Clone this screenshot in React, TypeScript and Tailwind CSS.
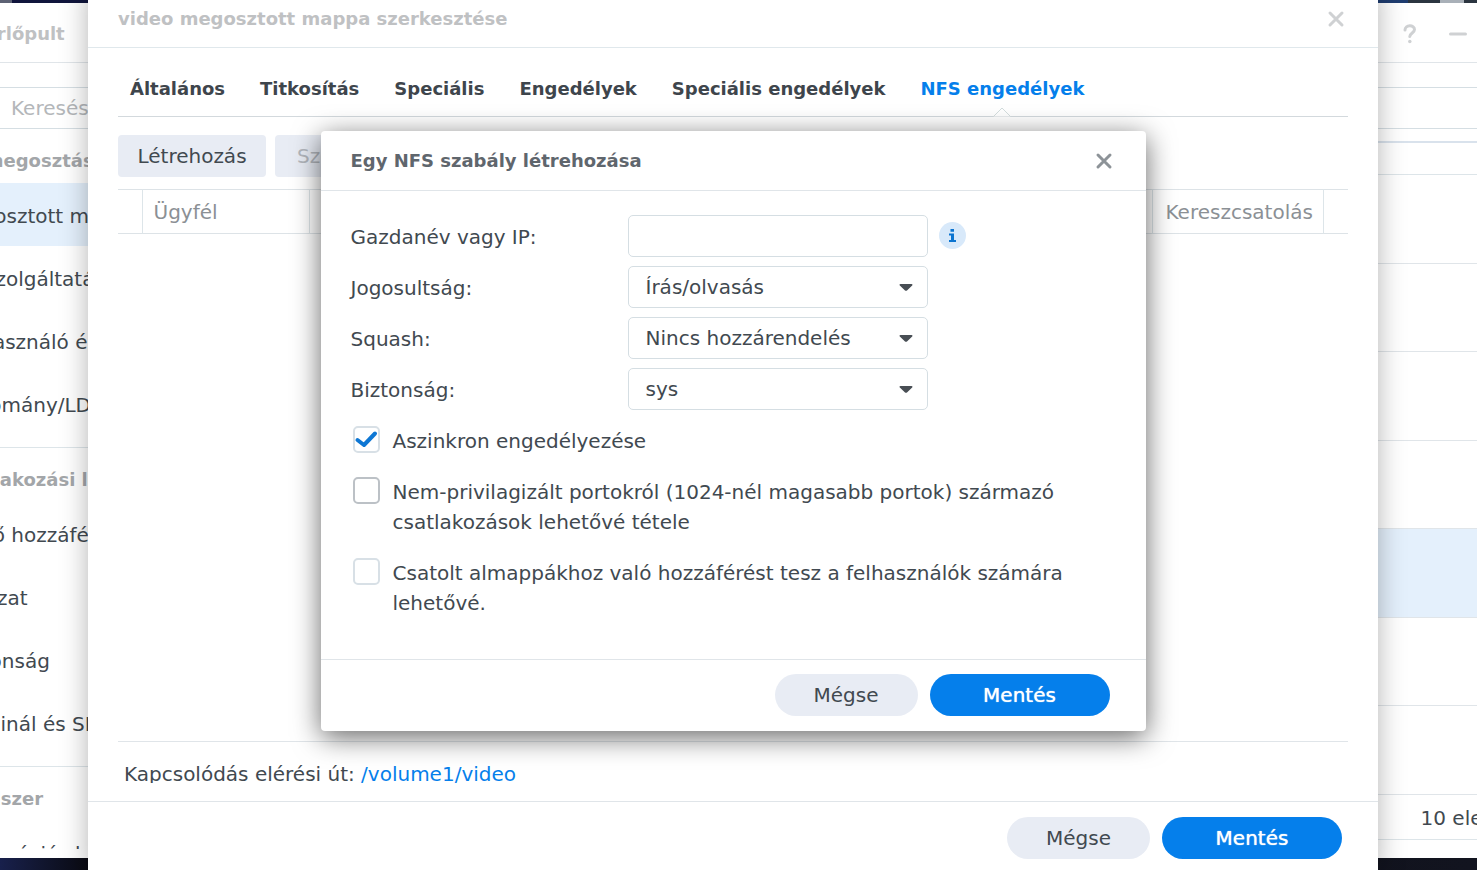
import type { ReactNode } from "react";
import { clsx } from "clsx";

const NAV_GROUPS = [
  {
    title: "Fájlmegosztás",
    items: ["Megosztott mappa", "Fájlszolgáltatások", "Felhasználó és csoport", "Tartomány/LDAP"],
  },
  {
    title: "Csatlakozási lehetőség",
    items: ["Külső hozzáférés", "Hálózat", "Biztonság", "Terminál és SNMP"],
  },
  { title: "Rendszer", items: ["Információs központ"] },
];

const TABS = ["Általános", "Titkosítás", "Speciális", "Engedélyek", "Speciális engedélyek", "NFS engedélyek"];
const ACTIVE_TAB = "NFS engedélyek";

const SELECTS = [
  { id: "privilege", label: "Jogosultság:", value: "Írás/olvasás" },
  { id: "squash", label: "Squash:", value: "Nincs hozzárendelés" },
  { id: "security", label: "Biztonság:", value: "sys" },
];

const OPTIONS = [
  { id: "async", label: "Aszinkron engedélyezése", checked: true, border: "border-[#d8e0e6]" },
  {
    id: "ports",
    label: "Nem-privilagizált portokról (1024-nél magasabb portok) származó csatlakozások lehetővé tétele",
    checked: false,
    border: "border-[#bcc1c6]",
  },
  {
    id: "subfolders",
    label: "Csatolt almappákhoz való hozzáférést tesz a felhasználók számára lehetővé.",
    checked: false,
    border: "border-[#d8e0e6]",
  },
];

function CloseButton({ className }: { className: string }) {
  return (
    <button type="button" aria-label="Bezárás" className={className}>
      <svg width="18" height="18" viewBox="0 0 18 18" fill="none" stroke="currentColor" strokeWidth="3" strokeLinecap="round">
        <path d="M3 3l12 12M15 3L3 15" />
      </svg>
    </button>
  );
}

function DialogFooter() {
  return (
    <footer className="flex h-[72px] shrink-0 items-center justify-end gap-3 border-t border-[#e0e5e9] px-9">
      <button type="button" className="h-[42px] w-[143px] rounded-full bg-[#e8ecf4]">
        Mégse
      </button>
      <button type="button" className="h-[42px] w-[180px] rounded-full bg-[#057feb] text-white [text-shadow:0_0_1px_white]">
        Mentés
      </button>
    </footer>
  );
}

function FormRow({ id, label, children }: { id: string; label: string; children: ReactNode }) {
  return (
    <div className="flex items-center">
      <label htmlFor={id} className="w-[277px] pt-0.5">
        {label}
      </label>
      {children}
    </div>
  );
}

function RuleDialog() {
  return (
    <section
      role="dialog"
      aria-label="Egy NFS szabály létrehozása"
      className="flex w-[825px] flex-col rounded bg-white shadow-[0_6px_28px_rgba(0,0,0,0.6)]"
    >
      <header className="flex h-[60px] items-center justify-between border-b border-[#e0e5e9] pt-0.5 pr-[33px] pl-[30px]">
        <h2 className="text-lg font-bold text-[#5f666d]">Egy NFS szabály létrehozása</h2>
        <CloseButton className="text-[#8d9398]" />
      </header>

      <form className="px-[30px] pt-6 pb-[41px]">
        <div className="flex flex-col gap-[9px]">
          <FormRow id="host" label="Gazdanév vagy IP:">
            <input id="host" type="text" className="h-[42px] w-[300px] rounded-[5px] border border-[#d5dee3] px-4 outline-none" />
            <button
              type="button"
              aria-label="Információ"
              className="ml-[11px] flex size-[27px] items-center justify-center rounded-full bg-[#d8e9fa] text-[#0b74d0]"
            >
              <svg width="9" height="13" viewBox="0 0 9 13" fill="currentColor">
                <path d="M2.500 0h3.500v2.800H2.500zM1 4.500h5V11h2v2H1v-2h2V6.500H1z" />
              </svg>
            </button>
          </FormRow>

          {SELECTS.map((field) => (
            <FormRow key={field.id} id={field.id} label={field.label}>
              <div className="relative">
                <select
                  id={field.id}
                  className="h-[42px] w-[300px] appearance-none rounded-[5px] border border-[#d5dee3] bg-white px-[17px] outline-none"
                >
                  <option>{field.value}</option>
                </select>
                <svg
                  className="pointer-events-none absolute top-[18px] right-[15px]"
                  width="14"
                  height="7"
                  viewBox="0 0 14 7"
                  fill="#484e54"
                >
                  <path d="M1.500 0h11c1 0 1.300.900.700 1.500L8 6.400c-.600.600-1.400.600-2 0L.800 1.500C.200.900.500 0 1.500 0z" />
                </svg>
              </div>
            </FormRow>
          ))}
        </div>

        <div className="mt-4 flex flex-col gap-[21px]">
          {OPTIONS.map((option) => (
            <div key={option.id} className="flex items-start pl-[2px]">
              <div className="relative size-[27px] shrink-0">
                <input
                  id={option.id}
                  type="checkbox"
                  defaultChecked={option.checked}
                  className={clsx("peer block size-[27px] appearance-none rounded-[5px] border-2", option.border)}
                />
                <svg
                  className="pointer-events-none absolute inset-0 hidden peer-checked:block"
                  width="27"
                  height="27"
                  viewBox="0 0 27 27"
                  fill="none"
                  stroke="#0e77d4"
                  strokeWidth="4"
                  strokeLinecap="round"
                  strokeLinejoin="round"
                >
                  <path d="M4.500 14l6.500 5L22 7.500" />
                </svg>
              </div>
              <label htmlFor={option.id} className="ml-[13px] leading-[30px]">
                {option.label}
              </label>
            </div>
          ))}
        </div>
      </form>

      <DialogFooter />
    </section>
  );
}

function FolderDialog() {
  return (
    <section
      role="dialog"
      aria-label="video megosztott mappa szerkesztése"
      className="absolute -top-3 right-[99px] -bottom-[3px] left-[88px] flex flex-col bg-white shadow-[0_0_26px_rgba(0,0,0,0.3)]"
    >
      <header className="flex h-[60px] shrink-0 items-center justify-between border-b border-[#e0e8ec] pt-0.5 pr-[33px] pl-[30px]">
        <h1 className="text-lg font-bold text-[#bfc1c3]">video megosztott mappa szerkesztése</h1>
        <CloseButton className="text-[#cfd1d3]" />
      </header>

      <div className="flex min-h-0 flex-1 flex-col px-[30px]">
        <nav role="tablist" className="flex h-[69px] shrink-0 gap-[35px] border-b border-[#d3d9dd] px-3">
          {TABS.map((tab) => (
            <button
              key={tab}
              type="button"
              role="tab"
              aria-selected={tab === ACTIVE_TAB}
              className={clsx(
                "relative pt-[14px] text-lg font-bold whitespace-nowrap",
                tab === ACTIVE_TAB ? "text-[#057feb]" : "text-[#3e454c]"
              )}
            >
              {tab}
              {tab === ACTIVE_TAB && (
                <svg
                  className="absolute -bottom-px left-1/2 -translate-x-1/2"
                  width="18"
                  height="10"
                  viewBox="0 0 18 10"
                  fill="white"
                  stroke="#d3dddd"
                >
                  <path d="M.5 9.500L9 1l8.500 8.500" />
                </svg>
              )}
            </button>
          ))}
        </nav>

        <div className="mt-[18px] flex h-[42px] shrink-0 gap-[9px]">
          <button type="button" className="w-[148px] rounded bg-[#e8ecf4] whitespace-nowrap">
            Létrehozás
          </button>
          <button type="button" disabled className="rounded bg-[#e8ecf4] px-[22px] text-[#b2b6bc]">
            Szerkesztés
          </button>
        </div>

        <table className="mt-3 w-full table-fixed border-y border-[#dde3e7]">
          <thead>
            <tr className="h-11 text-left text-[#8b9095]">
              <td className="w-6 border-r border-[#dde5e9]" />
              <th className="w-[167px] border-r border-[#dde5e9] px-[11px] font-normal">Ügyfél</th>
              <td />
              <th className="w-[171px] border-x border-[#dde5e9] pl-[13px] font-normal whitespace-nowrap">Kereszcsatolás</th>
              <td className="w-[25px]" />
            </tr>
          </thead>
        </table>

        <div className="mt-auto h-[60px] shrink-0 border-t border-[#e0e5e9] pt-[17px]">
          <p className="h-6 overflow-hidden px-[6px] leading-[30px]">
            Kapcsolódás elérési út:{" "}
            <a href="#video" className="text-[#057feb]">
              /volume1/video
            </a>
          </p>
        </div>
      </div>

      <DialogFooter />

      <div className="absolute inset-0 flex items-center justify-center">
        <RuleDialog />
      </div>
    </section>
  );
}

function Sidebar() {
  return (
    <aside className="flex w-[320px] flex-col overflow-hidden">
      {NAV_GROUPS.map((group) => (
        <div key={group.title} className="border-b border-[#dde5e9] pb-3">
          <h3 className="flex h-[54px] items-end pb-2 pl-5 text-lg font-bold text-[#a3a6a9]">{group.title}</h3>
          {group.items.map((item) => (
            <a
              key={item}
              href="#nav"
              className={clsx(
                "flex h-[63px] items-center pt-0.5 pl-[23px] whitespace-nowrap",
                item === "Megosztott mappa" && "bg-[#e4f0fc]"
              )}
            >
              {item}
            </a>
          ))}
        </div>
      ))}
    </aside>
  );
}

function ControlPanel() {
  return (
    <main className="absolute top-[3px] -right-[109px] bottom-3 -left-[71px] flex flex-col bg-white">
      <header className="flex h-[60px] shrink-0 items-center justify-between border-b border-[#e0e5e9] pt-0.5 pr-[119px] pl-5">
        <h1 className="text-lg font-bold text-[#bfc1c3]">Vezérlőpult</h1>
        <div className="flex items-center gap-[29px] text-[#cfd1d3]">
          <button type="button" aria-label="Súgó">
            <svg width="20" height="20" viewBox="0 0 20 20" fill="none" stroke="currentColor" strokeWidth="3" strokeLinecap="round">
              <path d="M5 6c0-5.500 9.500-5.500 9.500-.5 0 3.500-4.500 3.500-4.700 7" />
              <path d="M9.800 17.500h.01" strokeWidth="3.500" />
            </svg>
          </button>
          <button type="button" aria-label="Kis méret">
            <svg width="18" height="18" viewBox="0 0 18 18" stroke="currentColor" strokeWidth="3" strokeLinecap="round">
              <path d="M1.500 9h15" />
            </svg>
          </button>
        </div>
      </header>

      <div className="mt-6 flex h-[42px] shrink-0 border-y border-[#d5dee3]">
        <input aria-label="Keresés" placeholder="Keresés" className="w-full px-[82px] placeholder:text-[#b4b7ba]" />
      </div>

      <div className="flex min-h-0 flex-1 overflow-hidden pb-[9px]">
        <Sidebar />
        <div className="mt-3 flex flex-1 flex-col border-t-2 border-[#d9e2ec]">
          <div className="h-8 border-b border-[#dde5e9]" />
          <div className="flex flex-1 flex-col">
            {[0, 1, 2, 3, 4, 5, 6].map((row) => (
              <div key={row} className={clsx("flex-1 border-b border-[#e0e5e9]", row === 4 && "bg-[#e4f0fc]")} />
            ))}
          </div>
          <div className="mb-[9px] flex h-[45px] items-center justify-end border-b border-[#dde5e9] pt-0.5 pr-[84px]">10 elem</div>
        </div>
      </div>
    </main>
  );
}

export default function App() {
  return (
    <div className="relative h-screen overflow-hidden bg-linear-to-r from-[#18204c] via-[#0a0a12] via-6% to-[#12141f] font-['DejaVu_Sans',Verdana,sans-serif] text-xl text-[#414950]">
      {/* wallpaper peeking out above the window */}
      <div className="flex h-[3px] justify-between bg-[#10153c]">
        <div className="w-3 bg-[#5d6274]" />
        <div className="flex w-[99px] bg-[#2b3540]">
          <div className="w-[30px] bg-[#1f3d70]" />
          <div className="ml-8 w-6 bg-[#a9b0b8]" />
        </div>
      </div>
      <ControlPanel />
      <FolderDialog />
    </div>
  );
}
